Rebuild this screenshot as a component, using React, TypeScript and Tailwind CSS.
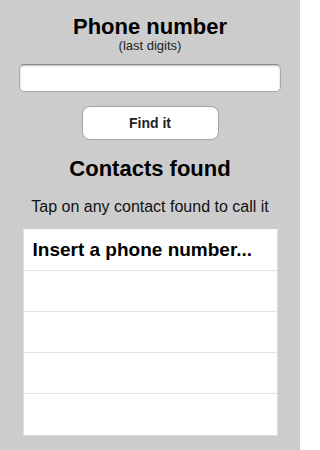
import React from 'react';

const rows = ['Insert a phone number...', '', '', '', ''];

export default function App() {
  return (
    <div className="w-[300px] h-[450px] bg-[#cccccc] flex flex-col items-center font-['Liberation_Sans',Arial,sans-serif] text-black overflow-hidden">
      {/* Header */}
      <h1 className="pt-[16px] text-[22px] leading-[22px] font-bold">Phone number</h1>
      <p className="text-[13px] leading-[15px] text-[#222]">(last digits)</p>

      {/* Search input */}
      <input
        type="text"
        className="mt-[11px] w-[262px] h-[28px] rounded-[5px] bg-white border border-[#a9a9a9] border-t-[#8a8a8a] shadow-[inset_0_1px_2px_rgba(0,0,0,0.25)] outline-none px-2 text-[15px]"
      />

      <button className="mt-[14px] w-[137px] h-[34px] rounded-[8px] bg-white border border-[#a3a3a3] text-[14px] font-bold text-[#222]">
        Find it
      </button>

      {/* Results */}
      <h2 className="mt-[18px] text-[22px] leading-[22px] font-bold">Contacts found</h2>
      <p className="mt-[18px] text-[16px] leading-[18px] text-[#111]">Tap on any contact found to call it</p>

      <ul className="mt-[13px] w-[255px] bg-white border border-[#dddddd] border-t-white">
        {rows.map((label, i) => (
          <li
            key={i}
            className="h-[41px] flex items-center px-[9px] border-b border-[#e2e2e2] last:border-b-0 text-[19px] font-bold"
          >
            {label}
          </li>
        ))}
      </ul>
    </div>
  );
}
